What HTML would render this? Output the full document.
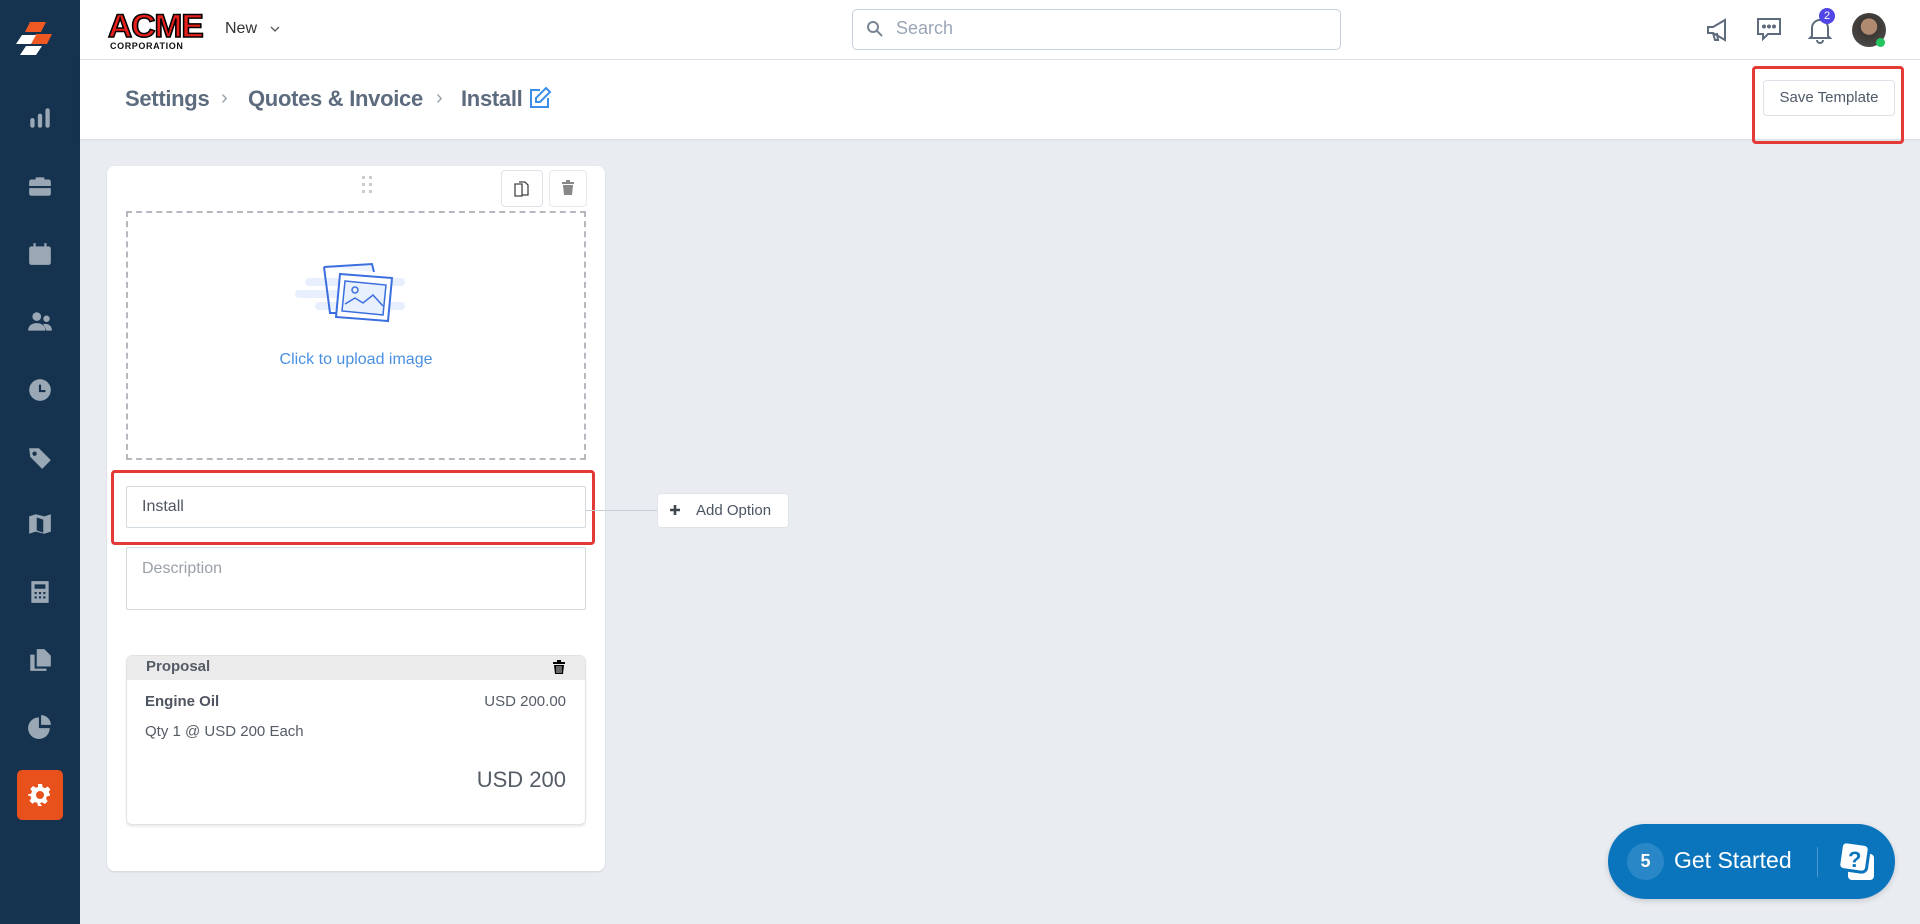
<!DOCTYPE html>
<html><head><meta charset="utf-8"><style>
*{box-sizing:border-box;margin:0;padding:0}
body{width:1920px;height:924px;overflow:hidden;background:#e9ecf1;font-family:"Liberation Sans",sans-serif;position:relative}
.abs{position:absolute}
#side{left:0;top:0;width:80px;height:924px;background:#15334e}
#top{left:80px;top:0;width:1840px;height:60px;background:#fff;border-bottom:1px solid #dde3ea}
#sub{left:80px;top:60px;width:1840px;height:79px;background:#fff;box-shadow:0 1px 2px rgba(0,0,0,.08)}
.ic{position:absolute;left:27px;width:26px;height:26px}
.ic svg{width:26px;height:26px;fill:#9aa7b4}
.bc{font-size:22px;color:#5c6b7e;top:86px;font-weight:bold;letter-spacing:-0.3px}
.chev{color:#9aa3ad;font-size:20px;top:87px}
.card{left:107px;top:166px;width:498px;height:705px;background:#fff;border-radius:8px;box-shadow:0 1px 2px rgba(0,0,0,.1)}
.redbox{border:3px solid #e53935;border-radius:4px}
.inp{border:1px solid #d3dae0;border-radius:2px;background:#fff;font-size:16px;color:#4f5660}
</style></head><body>
<div id="side" class="abs">
 <svg class="abs" style="left:14px;top:20px" width="50" height="46" viewBox="0 0 50 46">
  <polygon points="16,2 32,2 27,12 11,12" fill="#f05a22"/>
  <polygon points="22,14 38,14 33,24 17,24" fill="#f05a22"/>
  <polygon points="8,15 22,15 17,24 2,24" fill="#fff"/>
  <polygon points="12,26 28,26 22,35 6,35" fill="#fff"/>
 </svg>
 <div class="ic" style="top:105px"><svg viewBox="0 0 24 24"><rect x="3" y="12" width="4" height="9" rx="2"/><rect x="10" y="8" width="4" height="13" rx="2"/><rect x="17" y="3" width="4" height="18" rx="2"/></svg></div>
 <div class="ic" style="top:173px"><svg viewBox="0 0 24 24"><path d="M8 6V4h8v2h4a2 2 0 012 2v4H2V8a2 2 0 012-2zM2 14h20v5a2 2 0 01-2 2H4a2 2 0 01-2-2z"/></svg></div>
 <div class="ic" style="top:241px"><svg viewBox="0 0 24 24"><path d="M6 2h2v3h8V2h2v3h2a2 2 0 012 2v13a2 2 0 01-2 2H4a2 2 0 01-2-2V7a2 2 0 012-2h2z"/></svg></div>
 <div class="ic" style="top:309px"><svg viewBox="0 0 24 24"><circle cx="9" cy="7" r="4"/><path d="M1 20c0-5 4-7 8-7s8 2 8 7z"/><circle cx="18" cy="9" r="3"/><path d="M15 14c4-1 8 1 8 6h-5z"/></svg></div>
 <div class="ic" style="top:377px"><svg viewBox="0 0 24 24"><path d="M12 2a10 10 0 110 20 10 10 0 010-20zm-1 5v7h6v-2h-4V7z"/></svg></div>
 <div class="ic" style="top:445px"><svg viewBox="0 0 24 24"><path d="M2 3h9l11 11-8 8L3 11zm5 3a2 2 0 100 4 2 2 0 000-4z"/></svg></div>
 <div class="ic" style="top:511px"><svg viewBox="0 0 24 24"><path d="M2 5l6-2 8 2 6-2v16l-6 2-8-2-6 2zm7 1v12l6 2V8z"/></svg></div>
 <div class="ic" style="top:579px"><svg viewBox="0 0 24 24"><path d="M4 2h16v20H4zm3 3v4h10V5zm0 7v2h2v-2zm4 0v2h2v-2zm4 0v2h2v-2zm-8 4v2h2v-2zm4 0v2h2v-2zm4 0v2h2v-2z"/></svg></div>
 <div class="ic" style="top:647px"><svg viewBox="0 0 24 24"><path d="M9 2h7l6 6v10H9zM3 7h4v13h11v2H3z"/></svg></div>
 <div class="ic" style="top:713px"><svg viewBox="0 0 24 24"><path d="M11 4v10h10a10 10 0 11-10-10zm2-2a9 9 0 019 9h-9z"/></svg></div>
 <div class="abs" style="left:17px;top:770px;width:46px;height:50px;background:#e8501c;border-radius:5px"></div>
 <svg class="abs" style="left:28px;top:783px" width="24" height="24" viewBox="0 0 24 24"><path fill="#fff" fill-rule="evenodd" d="M10 1h4l.6 3 2.4 1.2 2.6-1.7 2.8 2.8-1.7 2.6L22 11.4V12.6l-3 .6-1 2.4 1.7 2.6-2.8 2.8-2.6-1.7-2.4 1L14 23h-4l-.6-3-2.4-1-2.6 1.7-2.8-2.8 1.7-2.6-1-2.4L0 12.6v-1.2l3-.6 1-2.4-1.7-2.6L5.1 3l2.6 1.7L10 4zM12 8a4 4 0 100 8 4 4 0 000-8z"/></svg>
</div>
<div id="top" class="abs"></div>
<div class="abs" style="left:108px;top:10px;font-family:'Liberation Sans';font-weight:bold;font-size:32px;color:#e8201c;letter-spacing:-1px;line-height:32px;-webkit-text-stroke:1.5px #000;transform:scaleX(1.05);transform-origin:left">ACME</div>
<div class="abs" style="left:110px;top:41px;font-size:9px;font-weight:bold;color:#111;letter-spacing:0.6px">CORPORATION</div>
<div class="abs" style="left:225px;top:20px;font-size:16px;color:#333">New</div>
<svg class="abs" style="left:270px;top:25px" width="10" height="8" viewBox="0 0 10 8"><path d="M1 2l4 4 4-4" stroke="#555" fill="none" stroke-width="1.3"/></svg>
<div class="abs" style="left:852px;top:9px;width:489px;height:41px;border:1px solid #c7d0da;border-radius:5px;background:#fff"></div>
<svg class="abs" style="left:866px;top:20px" width="18" height="18" viewBox="0 0 18 18"><circle cx="7" cy="7" r="5" stroke="#7a8594" stroke-width="2" fill="none"/><path d="M11 11l5 5" stroke="#7a8594" stroke-width="2"/></svg>
<div class="abs" style="left:896px;top:18px;font-size:18px;color:#9aa6b6">Search</div>
<svg class="abs" style="left:1704px;top:16px" width="28" height="28" viewBox="0 0 28 28" fill="none" stroke="#5e6b7c" stroke-width="2"><path d="M4 11h5l12-7v20L9 17H4z"/><path d="M9 17l2 7h3l-1-7"/></svg>
<svg class="abs" style="left:1754px;top:14px" width="30" height="30" viewBox="0 0 30 30" fill="none" stroke="#5e6b7c" stroke-width="2"><path d="M4 5h22v15H14l-5 5v-5H4z"/><circle cx="10" cy="12.5" r="1" fill="#5e6b7c"/><circle cx="15" cy="12.5" r="1" fill="#5e6b7c"/><circle cx="20" cy="12.5" r="1" fill="#5e6b7c"/></svg>
<svg class="abs" style="left:1806px;top:14px" width="28" height="30" viewBox="0 0 28 30" fill="none" stroke="#5e6b7c" stroke-width="2"><path d="M6 22V14a8 8 0 0116 0v8l2 2H4z"/><path d="M11 26a3 3 0 006 0"/></svg>
<div class="abs" style="left:1819px;top:8px;width:16px;height:16px;border-radius:50%;background:#4f46e5;color:#fff;font-size:11px;text-align:center;line-height:16px">2</div>
<div class="abs" style="left:1852px;top:13px;width:34px;height:34px;border-radius:50%;background:radial-gradient(circle at 50% 40%,#b08a70 0 30%,#3a3633 32%,#555 100%)"></div>
<div class="abs" style="left:1876px;top:38px;width:9px;height:9px;border-radius:50%;background:#22c55e"></div>
<div id="sub" class="abs"></div>
<div class="abs bc" style="left:125px">Settings</div>
<div class="abs chev" style="left:221px">›</div>
<div class="abs bc" style="left:248px">Quotes &amp; Invoice</div>
<div class="abs chev" style="left:436px">›</div>
<div class="abs bc" style="left:461px">Install</div>
<svg class="abs" style="left:528px;top:86px" width="24" height="24" viewBox="0 0 24 24" fill="none" stroke="#3b8fe8" stroke-width="2"><path d="M12 4H3v17h17v-9"/><path d="M18 2l4 4-10 10H8v-4z"/></svg>
<div class="abs redbox" style="left:1752px;top:66px;width:152px;height:78px"></div>
<div class="abs" style="left:1763px;top:80px;width:132px;height:36px;border:1px solid #dde2e8;border-radius:4px;background:#fff;font-size:15px;color:#4f5a68;text-align:center;line-height:34px">Save Template</div>
<div class="abs card"></div>
<svg class="abs" style="left:362px;top:176px" width="12" height="18"><g fill="#c9cdd2"><rect x="0" y="0" width="3" height="3"/><rect x="7" y="0" width="3" height="3"/><rect x="0" y="7" width="3" height="3"/><rect x="7" y="7" width="3" height="3"/><rect x="0" y="14" width="3" height="3"/><rect x="7" y="14" width="3" height="3"/></g></svg>
<div class="abs" style="left:501px;top:170px;width:42px;height:37px;border:1px solid #dde2e8;border-radius:4px;background:#fff"></div>
<svg class="abs" style="left:513px;top:180px" width="18" height="18" viewBox="0 0 18 18" fill="none" stroke="#444" stroke-width="1.3"><path d="M2 4h7v12H2z"/><path d="M6 2h6l3 3v10H9"/></svg>
<div class="abs" style="left:549px;top:170px;width:38px;height:37px;border:1px solid #e6e9ed;border-radius:4px;background:#fff"></div>
<svg class="abs" style="left:561px;top:180px" width="14" height="16" viewBox="0 0 14 16" fill="#888"><rect x="1" y="2" width="12" height="2"/><rect x="5" y="0" width="4" height="2"/><path d="M2 5h10l-1 10H3z"/></svg>
<div class="abs" style="left:126px;top:211px;width:460px;height:249px;border:2px dashed #b5b9bf"></div>
<svg class="abs" style="left:295px;top:258px" width="120" height="70" viewBox="0 0 120 70"><g fill="#e8f0fd"><rect x="10" y="20" width="100" height="8" rx="4"/><rect x="0" y="32" width="60" height="8" rx="4"/><rect x="20" y="44" width="90" height="8" rx="4"/></g><path d="M29 9l48-3 2 8" stroke="#3b6fe0" stroke-width="2" fill="#eef3fd"/><path d="M29 9l6 46 7 0" stroke="#3b6fe0" stroke-width="2" fill="none"/><path d="M45 16l52 4-4 43-52-4z" fill="#fff" stroke="#3b6fe0" stroke-width="2"/><path d="M50 23l41 4-3 30-41-4z" fill="#e8f0fd" stroke="#3b6fe0" stroke-width="1.5"/><circle cx="60" cy="32" r="3" fill="none" stroke="#3b6fe0" stroke-width="1.5"/><path d="M50 46l10-6 8 5 10-8 10 11" fill="none" stroke="#3b6fe0" stroke-width="1.5"/></svg>
<div class="abs" style="left:126px;top:351px;width:460px;text-align:center;font-size:16px;color:#4a90e2">Click to upload image</div>
<div class="abs redbox" style="left:111px;top:470px;width:484px;height:75px"></div>
<div class="abs inp" style="left:126px;top:486px;width:460px;height:42px;padding:11px 15px">Install</div>
<div class="abs inp" style="left:126px;top:547px;width:460px;height:63px;padding:12px 15px;color:#9aa0a8">Description</div>
<div class="abs" style="left:586px;top:510px;width:71px;height:1px;background:#c8ced6"></div>
<div class="abs" style="left:657px;top:493px;width:132px;height:35px;background:#fff;border-radius:4px;border:1px solid #e0e4e9;font-size:15px;color:#4a5563;line-height:33px;padding-left:38px">Add Option</div>
<svg class="abs" style="left:669px;top:504px" width="12" height="12"><path d="M6 1v10M1 6h10" stroke="#3e4650" stroke-width="2.6"/></svg>
<div class="abs" style="left:126px;top:655px;width:460px;height:170px;border:1px solid #e0e3e7;border-radius:6px;background:#fff;box-shadow:0 2px 2px rgba(0,0,0,.08);overflow:hidden">
 <div style="height:24px;background:#ebebeb;font-size:15px;font-weight:bold;color:#555c66;padding:2px 19px">Proposal</div>
</div>
<svg class="abs" style="left:553px;top:660px" width="12" height="14" viewBox="0 0 12 14"><rect x="0" y="2" width="12" height="2"/><rect x="4" y="0" width="4" height="2"/><path d="M1 5h10l-1 9H2z"/><path d="M4 6v7M6 6v7M8 6v7" stroke="#fff" stroke-width=".8"/></svg>
<div class="abs" style="left:145px;top:693px;font-size:15px;font-weight:bold;color:#4e5560">Engine Oil</div>
<div class="abs" style="left:440px;top:693px;width:126px;text-align:right;font-size:15px;color:#555c66">USD 200.00</div>
<div class="abs" style="left:145px;top:723px;font-size:15px;color:#555c66">Qty 1 @ USD 200 Each</div>
<div class="abs" style="left:400px;top:767px;width:166px;text-align:right;font-size:22px;color:#555c66">USD 200</div>
<div class="abs" style="left:1608px;top:824px;width:287px;height:75px;border-radius:38px;background:#0a75bd;box-shadow:0 2px 6px rgba(0,0,0,.15)"></div>
<div class="abs" style="left:1627px;top:843px;width:37px;height:37px;border-radius:50%;background:#2a87c7;color:#fff;font-weight:bold;font-size:18px;text-align:center;line-height:37px">5</div>
<div class="abs" style="left:1674px;top:847px;font-size:23px;color:#fff">Get Started</div>
<div class="abs" style="left:1817px;top:847px;width:1px;height:30px;background:#4a98cf"></div>
<svg class="abs" style="left:1838px;top:842px" width="40" height="40" viewBox="0 0 40 40"><rect x="10" y="12" width="26" height="26" rx="4" fill="#fff"/><rect x="2" y="1" width="28" height="28" rx="5" fill="#fff" stroke="#0a75bd" stroke-width="3" transform="rotate(8 16 15)"/><text x="10" y="25" font-size="22" font-weight="bold" fill="#0a75bd" font-family="Liberation Sans">?</text></svg>
</body></html>
